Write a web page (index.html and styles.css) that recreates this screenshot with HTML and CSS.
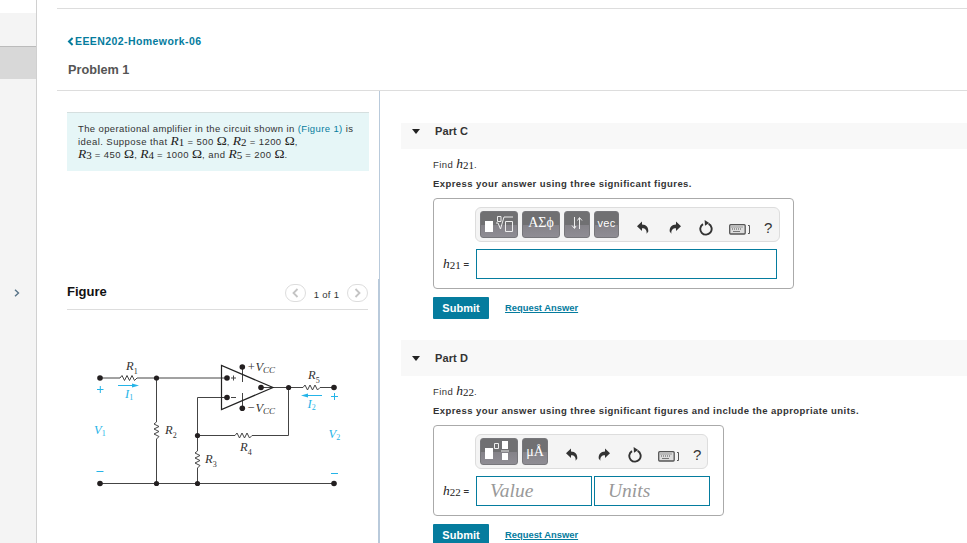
FILE: index.html
```
<!DOCTYPE html>
<html lang="en">
<head>
    <meta charset="UTF-8">
    <meta name="viewport" content="width=device-width, initial-scale=1.0">
    <title>EEEN202-Homework-06</title>
    <link rel="stylesheet" href="styles.css">
</head>
<body>

<!-- shared icons -->
<svg class="defs" width="0" height="0">
    <symbol id="undo" viewBox="0 0 12 14">
        <path d="M0 5.2L5 .5V3.4C9.4 3.6 11.6 6 11.3 10.6L9.6 12.8C10 9 8.4 7.2 5 7.2V10Z" fill="#333"/>
    </symbol>
    <symbol id="reset" viewBox="0 0 14 16">
        <path d="M9.600 3.900A5.700 5.700 0 1 1 4 4.100" fill="none" stroke="#333" stroke-width="1.9"/>
        <path d="M5.600 0L10.200 2.900L6 5.800Z" fill="#333"/>
    </symbol>
    <symbol id="keyboard" viewBox="0 0 22 11">
        <rect x=".7" y=".7" width="15.500" height="9.300" rx="1" fill="#ddd" stroke="#555" stroke-width="1.3"/>
        <path d="M2.500 3H14M3 5H12" stroke="#555" stroke-width="1.2" stroke-dasharray="1 1"/>
        <path d="M4 7.500H11" stroke="#777"/>
        <path d="M19 1.500H20.500V9.500H19" fill="none" stroke="#555"/>
    </symbol>
</svg>

<div class="page">
    <div class="sidebar">
        <div class="sidebar-top"></div>
        <div class="sidebar-item"></div>
        <div class="sidebar-item active"></div>
        <svg class="expand" width="6" height="8" viewBox="0 0 6 8"><path d="M1 .7L4.500 4L1 7.300" fill="none" stroke="#577387" stroke-width="1.4"/></svg>
    </div>

    <div class="main">
        <div class="header">
            <a class="back"><svg width="7" height="9" viewBox="0 0 7 9"><path d="M5.600 1L2 4.500L5.600 8" fill="none" stroke="#057c9e" stroke-width="2"/></svg>EEEN202-Homework-06</a>
            <h1>Problem 1</h1>
        </div>

        <div class="columns">
            <div class="left">
                <div class="problem">
                    <div>The operational amplifier in the circuit shown in <a>(Figure 1)</a> is</div>
                    <div class="values">ideal. Suppose that <span class="var"><i>R</i><sub>1</sub></span> = 500 <span class="ohm">Ω</span>, <span class="var"><i>R</i><sub>2</sub></span> = 1200 <span class="ohm">Ω</span>,</div>
                    <div class="values"><span class="var"><i>R</i><sub>3</sub></span> = 450 <span class="ohm">Ω</span>, <span class="var"><i>R</i><sub>4</sub></span> = 1000 <span class="ohm">Ω</span>, and <span class="var"><i>R</i><sub>5</sub></span> = 200 <span class="ohm">Ω</span>.</div>
                </div>

                <div class="figure">
                    <div class="figure-head">
                        <h2>Figure</h2>
                        <span class="nav"><svg width="7" height="10" viewBox="0 0 7 10"><path d="M5.500 1L1.500 5L5.500 9" fill="none" stroke="#c4c4c4" stroke-width="1.8"/></svg></span>
                        <span class="count">1 of 1</span>
                        <span class="nav"><svg width="7" height="10" viewBox="0 0 7 10"><path d="M1.500 1L5.500 5L1.500 9" fill="none" stroke="#c4c4c4" stroke-width="1.8"/></svg></span>
                    </div>
                    <svg class="circuit" width="270" height="150" viewBox="80 345 270 150">
                        <g fill="none" stroke="#444" stroke-width="1">
                            <path d="M100 378H120L122 375.5L124.5 380.5L127 375.5L129.500 380.500L132 375.500L134.500 380.500L137 378H227"/>
                            <path d="M156.500 378V422L154 424L159 426.500L154 429L159 431.500L154 434L159 436.500L156.500 439V483"/>
                            <path d="M227 397.500H197.500V451L195 453L200 455.500L195 458L200 460.500L195 463L200 465.500L197.500 468V483"/>
                            <path d="M197.500 435.500H235L237 433L239.500 438L242 433L244.500 438L247 433L249.500 438L252 435.500H288.500V387.500"/>
                            <path d="M261 387.500H303L305 385L307.500 390L310 385L312.500 390L315 385L317.500 390L320 387.500H334"/>
                            <path d="M100 483.500H334M242.500 367V382M242.500 393V408"/>
                            <path d="M221.500 365.500V409.500L273 387.500Z" stroke="#222" stroke-width="1.2"/>
                        </g>
                        <g fill="#231f20">
                            <circle cx="100" cy="378" r="2.800"/><circle cx="156.500" cy="378" r="2.600"/>
                            <circle cx="227" cy="378" r="2.800"/><circle cx="227" cy="397.500" r="2.800"/>
                            <circle cx="242.300" cy="367" r="2.800"/><circle cx="242.300" cy="408.300" r="2.800"/>
                            <circle cx="261" cy="387.500" r="2.800"/><circle cx="288.600" cy="387.500" r="2.600"/>
                            <circle cx="334" cy="387.500" r="2.800"/><circle cx="197.500" cy="435.500" r="2.600"/>
                            <circle cx="100" cy="483.500" r="2.800"/><circle cx="156.500" cy="483.500" r="2.600"/>
                            <circle cx="197.500" cy="483.500" r="2.600"/><circle cx="334" cy="483.500" r="2.800"/>
                        </g>
                        <g class="label">
                            <text x="126" y="370">R<tspan class="sub" dy="4">1</tspan></text>
                            <text x="165" y="434">R<tspan class="sub" dy="4">2</tspan></text>
                            <text x="205" y="463">R<tspan class="sub" dy="4">3</tspan></text>
                            <text x="240" y="451">R<tspan class="sub" dy="4">4</tspan></text>
                            <text x="308" y="379">R<tspan class="sub" dy="4">5</tspan></text>
                            <text x="247" y="371">+V<tspan class="cc" dy="2">CC</tspan></text>
                            <text x="247" y="412">−V<tspan class="cc" dy="2">CC</tspan></text>
                        </g>
                        <path d="M231 378H236M233.500 375.500V380.500M231 397.500H236" stroke="#444"/>
                        <g class="label blue">
                            <text x="125" y="398">I<tspan class="sub" dy="2">1</tspan></text>
                            <text x="307.500" y="408">I<tspan class="sub" dy="2">2</tspan></text>
                            <text x="94" y="433.500">V<tspan class="sub" dy="2">1</tspan></text>
                            <text x="328.500" y="438">V<tspan class="sub" dy="2">2</tspan></text>
                        </g>
                        <path d="M97 389.500H103.500M100.300 386V393M331 396.500H338M334.500 393V400M96.500 471.500H103.500M331 473.500H338M118 385.500H134M307 395.500H322" stroke="#25b4e8"/>
                        <path d="M132 383.500L139 385.500L132 387.500ZM308 393.500L301 395.500L308 397.500Z" fill="#25b4e8"/>
                    </svg>
                </div>
            </div>

            <div class="right">
                <div class="part part-c">
                    <div class="part-head"><span class="caret"></span>Part C</div>
                    <div class="part-body">
                        <div class="find">Find <span class="hvar"><i>h</i><sub>21</sub></span>.</div>
                        <div class="express">Express your answer using three significant figures.</div>
                        <div class="answer">
                            <div class="toolbar">
                                <span class="tool w38"><svg width="30" height="20" viewBox="0 0 30 20"><path d="M1 8H9V19H1Z" fill="#fff"/><path d="M13.500 3.500H17V8.500H13.500ZM12 10H14L16.500 16L20 4H29M21.500 8.500H28.500V18.500H21.500Z" fill="none" stroke="#eee"/></svg></span>
                                <span class="tool w38 greek">ΑΣϕ</span>
                                <span class="tool w26"><svg width="12" height="14" viewBox="0 0 12 14"><path d="M3.500 1V12M1 9.500L3.500 12.500L5 10M8.500 13V2M6.500 4.500L8.500 1.500L11 4.500" fill="none" stroke="#eee"/></svg></span>
                                <span class="tool w25 vec">vec</span>
                                <span class="actions">
                                    <svg width="12" height="14"><use href="#undo"/></svg>
                                    <svg class="flip" width="12" height="14"><use href="#undo"/></svg>
                                    <svg class="reset" width="14" height="16"><use href="#reset"/></svg>
                                    <svg class="kb" width="22" height="11"><use href="#keyboard"/></svg>
                                    <span class="help">?</span>
                                </span>
                            </div>
                            <div class="entry">
                                <span class="entry-label"><span class="hvar"><i>h</i><sub>21</sub></span> <b>=</b></span>
                                <div class="field wide"></div>
                            </div>
                        </div>
                        <div class="buttons"><button>Submit</button><a>Request Answer</a></div>
                    </div>
                </div>

                <div class="part part-d">
                    <div class="part-head tall"><span class="caret"></span>Part D</div>
                    <div class="part-body">
                        <div class="find">Find <span class="hvar"><i>h</i><sub>22</sub></span>.</div>
                        <div class="express">Express your answer using three significant figures and include the appropriate units.</div>
                        <div class="answer small">
                            <div class="toolbar">
                                <span class="tool w38"><svg width="28" height="22" viewBox="0 0 28 22"><path d="M0 9H8V20H0ZM17 2H23V10H17ZM17 14H23V21H17Z" fill="#fff"/><path d="M9.500 4.500H13.500V9.500H9.500ZM16 12H24" fill="none" stroke="#eee"/></svg></span>
                                <span class="tool w26 greek unit">μÅ</span>
                                <span class="actions">
                                    <svg width="12" height="14"><use href="#undo"/></svg>
                                    <svg class="flip" width="12" height="14"><use href="#undo"/></svg>
                                    <svg class="reset" width="14" height="16"><use href="#reset"/></svg>
                                    <svg class="kb" width="22" height="11"><use href="#keyboard"/></svg>
                                    <span class="help">?</span>
                                </span>
                            </div>
                            <div class="entry">
                                <span class="entry-label"><span class="hvar"><i>h</i><sub>22</sub></span> <b>=</b></span>
                                <div class="field">Value</div>
                                <div class="field">Units</div>
                            </div>
                        </div>
                        <div class="buttons"><button>Submit</button><a>Request Answer</a></div>
                    </div>
                </div>
            </div>
        </div>
    </div>
</div>

</body>
</html>
```
FILE: styles.css
```
* {
    box-sizing: border-box;
}
body {
    margin: 0;
    font-family: "Liberation Sans", Arial, sans-serif;
    font-size: 9.5px;
    color: #333;
    background-color: #fff;
    overflow: hidden;
}
a {
    color: #057c9e;
}
sub {
    line-height: 0;
}
.defs {
    display: none;
}
.page {
    display: flex;
    height: 543px;
}
.sidebar {
    width: 37px;
    flex: none;
    background-color: #f4f4f4;
    border-right: 1px solid #d0d0d0;
}
.sidebar-top {
    height: 13px;
    background-color: #fff;
}
.sidebar-item {
    height: 33px;
}
.sidebar-item.active {
    background-color: #d8d8d8;
    border-top: 1px solid #bbb;
}
.expand {
    display: block;
    margin: 210px 0 0 14px;
}
.main {
    flex: 1;
    margin-left: 20px;
    padding-top: 8px;
}
.header {
    height: 83px;
    padding-left: 10px;
    border-top: 1px solid #ddd;
    border-bottom: 1px solid #ddd;
}
.back {
    display: flex;
    align-items: center;
    gap: 1px;
    height: 12px;
    margin-top: 26px;
    font-size: 10.5px;
    font-weight: bold;
    letter-spacing: 0.42px;
}
h1 {
    margin: 15px 0 0 1px;
    font-size: 12.7px;
    line-height: 16px;
    font-weight: bold;
    color: #555;
}
.columns {
    display: flex;
    height: 452px;
}
.left {
    width: 323px;
    padding: 21px 10px 0;
    border-right: 1px solid #b9cadb;
}
.problem {
    width: 302px;
    height: 59px;
    padding: 9px 0 0 11px;
    background-color: #e6f6f7;
    border-top: 1px solid #d5dfdf;
    line-height: 13px;
    letter-spacing: 0.38px;
    white-space: nowrap;
}
.values {
    letter-spacing: 0.43px;
}
.var, .hvar, .ohm {
    font-family: "Liberation Serif", serif;
    font-size: 13.5px;
    line-height: 0;
    letter-spacing: 0;
    color: #222;
}
.var sub, .hvar sub {
    font-size: 11px;
    vertical-align: -1px;
}
.hvar {
    font-size: 13.5px;
}
.figure {
    width: 312px;
    margin-top: 108px;
    border-right: 1px solid #b9cadb;
    height: 264px;
}
.figure-head {
    display: flex;
    align-items: center;
    width: 301px;
    height: 31px;
    border-bottom: 1px solid #ddd;
}
h2 {
    flex: 1;
    margin: 0;
    padding-bottom: 6px;
    font-size: 13px;
    color: #111;
}
.nav {
    display: flex;
    align-items: center;
    justify-content: center;
    width: 21px;
    height: 18px;
    margin-bottom: 2px;
    border: 1px solid #ddd;
    border-radius: 9px;
}
.count {
    width: 41px;
    text-align: center;
    letter-spacing: 0.3px;
}
.circuit {
    display: block;
    margin: 35px 0 0 13px;
}
.label {
    font-family: "Liberation Serif", serif;
    font-style: italic;
    font-size: 12.5px;
    fill: #333;
}
.label .sub {
    font-size: 8px;
    font-style: normal;
}
.label .cc {
    font-size: 9px;
}
.label.blue {
    fill: #25b4e8;
}
.right {
    flex: 1;
    padding-left: 21px;
}
.part-c {
    padding-top: 32px;
    height: 249px;
}
.part-head {
    display: flex;
    align-items: center;
    gap: 15px;
    height: 26px;
    padding: 0 0 10px 11px;
    background-color: #f8f8f8;
    font-size: 11px;
    font-weight: bold;
    letter-spacing: 0.1px;
}
.part-head.tall {
    height: 36px;
    padding-bottom: 0;
}
.caret {
    border: 4px solid transparent;
    border-top: 5px solid #222;
    border-bottom: 0;
}
.part-body {
    padding: 9px 0 0 32px;
}
.find {
    height: 13px;
    line-height: 13px;
    letter-spacing: 0.4px;
}
.express {
    height: 12px;
    margin: 7px 0 8px;
    line-height: 12px;
    font-weight: bold;
    letter-spacing: 0.43px;
    white-space: nowrap;
}
.answer {
    width: 361px;
    height: 91px;
    padding: 8px 0 0 8px;
    border: 1px solid #aaa;
    border-radius: 4px;
}
.answer.small {
    width: 291px;
}
.toolbar {
    display: flex;
    gap: 4px;
    width: 305px;
    height: 35px;
    margin-left: 33px;
    padding: 3px 4px;
    background-color: #f4f4f4;
    border: 1px solid #ddd;
    border-radius: 6px;
}
.small .toolbar {
    width: 233px;
}
.tool {
    display: flex;
    align-items: center;
    justify-content: center;
    height: 27px;
    flex: none;
    padding-bottom: 3px;
    border-radius: 3px;
    border: 1px solid #77777b;
    background: linear-gradient(#707072 53%, #858389 54%, #8f8d94);
    color: #fff;
}
.w38 {
    width: 38px;
}
.w26 {
    width: 26px;
}
.w25 {
    width: 25px;
}
.greek {
    font-family: "Liberation Serif", serif;
    font-size: 14px;
}
.unit {
    padding-bottom: 0;
}
.vec {
    font-size: 11px;
    letter-spacing: 0.3px;
}
.actions {
    display: flex;
    align-items: center;
    flex: 1;
    gap: 19px;
    padding: 6px 0 0 14px;
}
.flip {
    margin-left: 1px;
    transform: scaleX(-1);
}
.reset {
    margin-left: -1px;
}
.kb {
    margin: 3px 0 0 -3px;
}
.help {
    margin-left: -6px;
    font-size: 15px;
}
.entry {
    display: flex;
    align-items: center;
    gap: 2px;
    margin-top: 7px;
}
.entry-label {
    width: 32px;
    padding-left: 1px;
    white-space: nowrap;
}
.field {
    width: 116px;
    height: 30px;
    border: 1px solid #057c9e;
    background-color: #fff;
    padding-left: 13px;
    font-family: "Liberation Serif", serif;
    font-style: italic;
    font-size: 19.5px;
    line-height: 28px;
    color: #999;
}
.wide {
    width: 301px;
}
.buttons {
    display: flex;
    align-items: center;
    gap: 16px;
    margin-top: 8px;
}
.buttons a {
    padding-bottom: 2px;
    font-size: 9.4px;
    font-weight: bold;
    text-decoration: underline;
}
button {
    width: 56px;
    height: 22px;
    padding: 0;
    border: 0;
    border-radius: 1px;
    background-color: #057c9e;
    color: #fff;
    font-family: inherit;
    font-size: 11px;
    font-weight: bold;
}
```
